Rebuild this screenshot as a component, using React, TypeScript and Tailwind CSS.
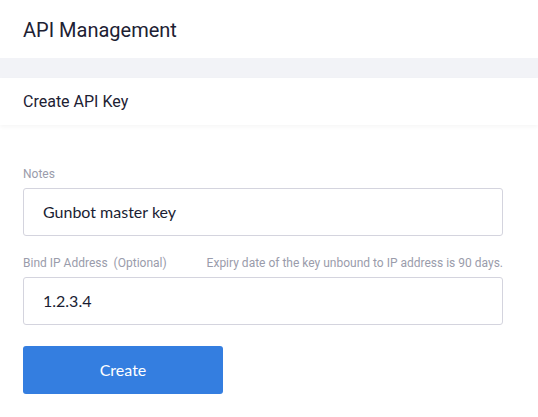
import React from "react";

export default function App() {
  return (
    <div className="w-[538px] h-[417px] bg-white overflow-hidden">
      <div className="h-[58px] flex items-center px-[23px] pt-[2px] font-['Roboto',sans-serif] text-[20px] text-[#1d2133]">
        API Management
      </div>
      <div className="h-[20px] bg-[#f2f3f7]" />
      <div className="h-[47px] flex items-center px-[23px] font-['Roboto',sans-serif] text-[16px] text-[#1d2133] shadow-[0_2px_4px_rgba(0,0,0,0.04)]">
        Create API Key
      </div>
      <div className="px-[23px] pt-[42px] font-['Roboto',sans-serif]">
        <div className="text-[12px] text-[#9a9cab] leading-[14px] mb-[7px]">Notes</div>
        <div className="w-[480px] h-[48px] border border-[#d4d4de] rounded-[3px] flex items-center px-[19px] font-['Lato',sans-serif] text-[16px] text-[#1a1d33]">
          Gunbot master key
        </div>
        <div className="w-[480px] mt-[20px] mb-[7px] flex justify-between text-[12px] text-[#9a9cab] leading-[14px]">
          <span className="whitespace-pre">Bind IP Address  (Optional)</span>
          <span>Expiry date of the key unbound to IP address is 90 days.</span>
        </div>
        <div className="w-[480px] h-[48px] border border-[#d4d4de] rounded-[3px] flex items-center px-[19px] font-['Lato',sans-serif] text-[16px] text-[#1a1d33]">
          1.2.3.4
        </div>
        <button className="mt-[21px] w-[200px] h-[48px] rounded-[3px] bg-[#347ee0] text-white font-['Lato',sans-serif] text-[16px] flex items-center justify-center">
          Create
        </button>
      </div>
    </div>
  );
}
